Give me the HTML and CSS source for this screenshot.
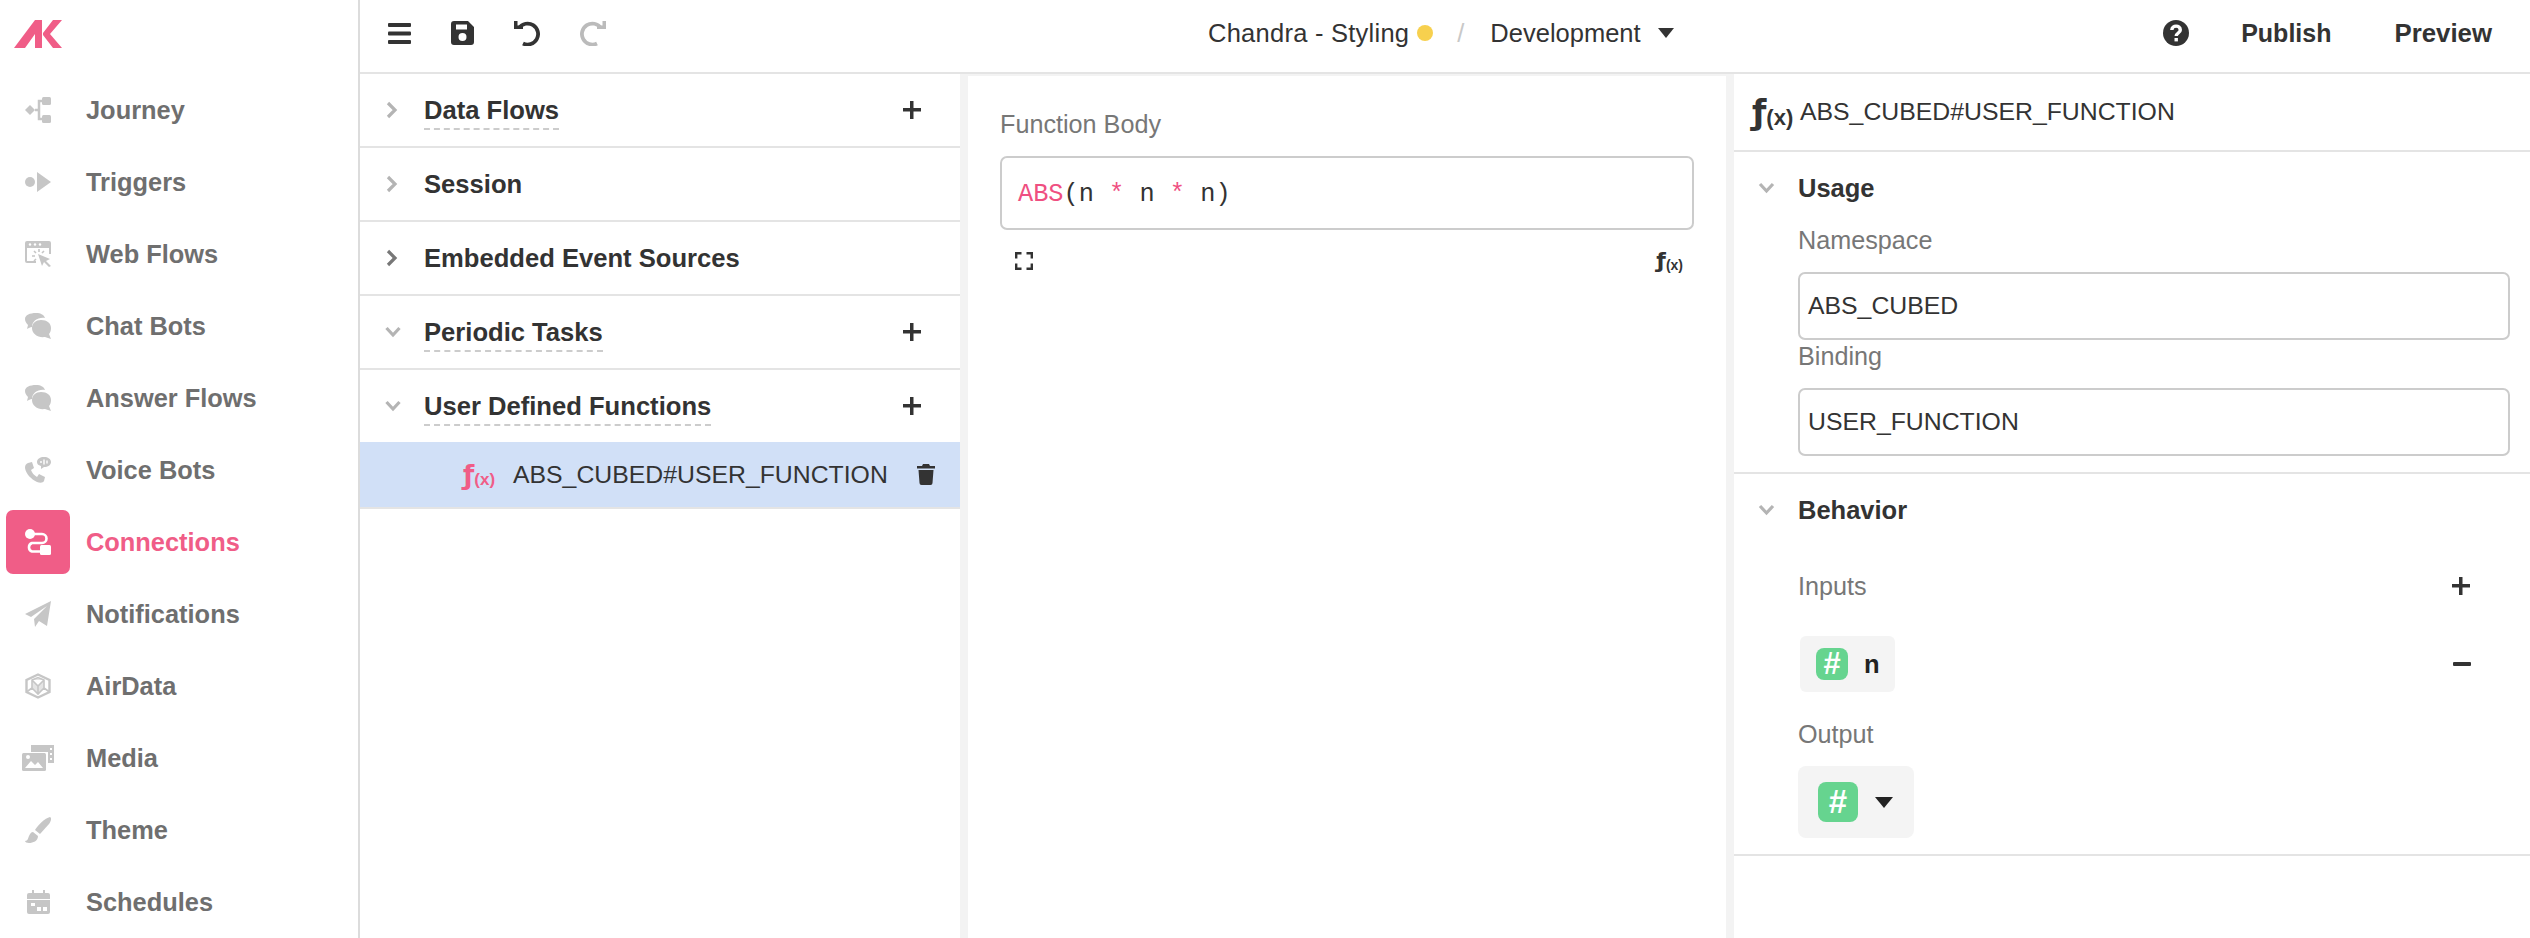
FILE: index.html
```html
<!DOCTYPE html>
<html lang="en">
<head>
<meta charset="utf-8">
<title>ABS_CUBED#USER_FUNCTION</title>
<link rel="stylesheet" href="styles.css">
</head>
<body>
<div class="app">
  <aside class="sidebar">
    <div class="logo">
      <svg width="48" height="28" viewBox="0 0 48 28"><path class="pink" d="M0 28 H11 L21 14 V28 H28 V0 H21Z M29 13 L39 0 H48 L36 14 L48 28 H39 L29 15Z"/></svg>
    </div>
    <nav>
      <a class="nav-item"><span class="nav-icon"><svg width="26" height="26" viewBox="0 0 26 26"><path class="ic" d="M0 13 L5 8 L10 13 L5 18Z"/><rect class="ic" x="17" y="0" width="9" height="8" rx="1.5"/><rect class="ic" x="17" y="18" width="9" height="8" rx="1.5"/><path class="ic-line" d="M17 4 H14 V22 H17 M10 13 H14"/></svg></span><span>Journey</span></a>
      <a class="nav-item"><span class="nav-icon"><svg width="26" height="22" viewBox="0 0 26 22"><circle class="ic" cx="5" cy="11" r="5"/><path class="ic" d="M12 1 L26 11 L12 21Z"/></svg></span><span>Triggers</span></a>
      <a class="nav-item"><span class="nav-icon"><svg width="26" height="26" viewBox="0 0 26 26"><path class="ic" d="M2 0 H24 A2 2 0 0 1 26 2 V13 H24 V7 H2 V20 H11 V22 H2 A2 2 0 0 1 0 20 V2 A2 2 0 0 1 2 0Z"/><path class="ic" d="M13 13 L25 18 L21 20 L26 25 L24 26 L19 21 L17 25Z"/><path class="ic-thin" d="M14 8 V11 M9 10 L11 12 M7 15 H10 M9 20 L11 18 M19 10 L17 12"/><circle class="ic-w" cx="5" cy="3.5" r="1.2"/><circle class="ic-w" cx="10" cy="3.5" r="1.2"/><circle class="ic-w" cx="15" cy="3.5" r="1.2"/></svg></span><span>Web Flows</span></a>
      <a class="nav-item"><span class="nav-icon"><svg width="26" height="26" viewBox="0 0 26 26"><path class="ic" d="M11 0 C16 0 19 2 20 5 C13 4 7 8 7 14 C5 14 4 15 2 16 L3 12 C1 10 0 8 0 6 C0 2 5 0 11 0Z"/><path class="ic" d="M16 7 C22 7 26 10 26 15 C26 18 25 20 24 21 L26 26 L20 24 C13 25 7 21 7 15 C7 10 11 7 16 7Z"/></svg></span><span>Chat Bots</span></a>
      <a class="nav-item"><span class="nav-icon"><svg width="26" height="26" viewBox="0 0 26 26"><path class="ic" d="M11 0 C16 0 19 2 20 5 C13 4 7 8 7 14 C5 14 4 15 2 16 L3 12 C1 10 0 8 0 6 C0 2 5 0 11 0Z"/><path class="ic" d="M16 7 C22 7 26 10 26 15 C26 18 25 20 24 21 L26 26 L20 24 C13 25 7 21 7 15 C7 10 11 7 16 7Z"/></svg></span><span>Answer Flows</span></a>
      <a class="nav-item"><span class="nav-icon"><svg width="26" height="26" viewBox="0 0 26 26"><path class="ic" d="M3 6 L7 5 L9 11 L6 13 C7 16 9 18 12 20 L14 17 L20 20 L19 24 C18 26 15 26 12 25 C6 22 1 17 0 11 C0 8 1 7 3 6Z"/><path class="ic" d="M19 0 C23 0 26 2 26 5 C26 8 23 10 19 10 L16 12 L16 9 C13 8 12 7 12 5 C12 2 15 0 19 0Z"/><path class="ic-thin-w" d="M16 4 V6 M19 2.5 V7.5 M22 3.5 V6.5"/></svg></span><span>Voice Bots</span></a>
      <a class="nav-item active"><span class="nav-icon"><svg width="26" height="26" viewBox="0 0 26 26"><circle class="wh" cx="5" cy="5" r="5"/><rect class="wh" x="15" y="16" width="11" height="10" rx="1.5"/><path class="wh-line" d="M8 5 H17 A4.5 4.5 0 0 1 17 14 H7 A4.5 4.5 0 0 0 7 22.5 H16"/></svg></span><span>Connections</span></a>
      <a class="nav-item"><span class="nav-icon"><svg width="26" height="26" viewBox="0 0 26 26"><path class="ic" d="M26 0 L22 25 L14 20 L10 26 L9 18 L22 5 L6 16 L0 13Z"/></svg></span><span>Notifications</span></a>
      <a class="nav-item"><span class="nav-icon"><svg width="26" height="26" viewBox="0 0 26 26"><path class="ic-outline" d="M13 1.5 L24.5 7 V19 L13 24.5 L1.5 19 V7Z"/><path class="ic-outline-thin" d="M7 7 L13 4.5 L19 7 V15 L13 21 L7 15Z M7 7 L13 13 L19 7 M13 13 V21 M1.5 19 L7 15 M24.5 19 L19 15"/></svg></span><span>AirData</span></a>
      <a class="nav-item"><span class="nav-icon"><svg width="32" height="26" viewBox="0 0 32 26"><path class="ic" d="M9 0 H32 V18 H26 V7 H9Z"/><rect class="ic" x="0" y="8" width="24" height="18" rx="1.5"/><path class="ic-w" d="M3 23 L9 16 L13 20 L16 17 L21 23Z"/><circle class="ic-w" cx="6" cy="12" r="2"/><rect class="ic-w" x="28" y="3" width="2" height="2"/><rect class="ic-w" x="28" y="8" width="2" height="2"/><rect class="ic-w" x="28" y="13" width="2" height="2"/></svg></span><span>Media</span></a>
      <a class="nav-item"><span class="nav-icon"><svg width="26" height="26" viewBox="0 0 26 26"><path class="ic" d="M25 0 C27 1 26 4 24 7 L15 17 L10 13 C13 8 20 1 25 0Z"/><path class="ic" d="M8 15 L13 19 C13 24 8 26 4 26 C2 26 0 25 0 24 C3 24 3 21 4 19 C5 17 6 15 8 15Z"/></svg></span><span>Theme</span></a>
      <a class="nav-item"><span class="nav-icon"><svg width="23" height="24" viewBox="0 0 23 24"><path class="ic" d="M2 3 H5 V0 H7 V3 H16 V0 H18 V3 H21 A2 2 0 0 1 23 5 V9 H0 V5 A2 2 0 0 1 2 3Z"/><path class="ic" d="M0 10 H23 V22 A2 2 0 0 1 21 24 H2 A2 2 0 0 1 0 22Z"/><rect class="ic-w" x="4" y="13" width="4" height="3"/><rect class="ic-w" x="10" y="17" width="4" height="4"/><rect class="ic-w" x="16" y="17" width="4" height="4"/></svg></span><span>Schedules</span></a>
    </nav>
  </aside>
  <main class="main">
    <header class="topbar">
      <div class="tools">
        <svg width="23" height="21" viewBox="0 0 23 21"><rect class="dk" y="0" width="23" height="4" rx="1"/><rect class="dk" y="8.5" width="23" height="4" rx="1"/><rect class="dk" y="17" width="23" height="4" rx="1"/></svg>
        <svg width="23" height="24" viewBox="0 0 23 24"><path class="dk" fill-rule="evenodd" d="M3 0 H17 L23 6 V21 A3 3 0 0 1 20 24 H3 A3 3 0 0 1 0 21 V3 A3 3 0 0 1 3 0Z M5 3.5 V8.5 H16 V3.5Z M11.5 12 A4 4 0 1 0 11.5 20 A4 4 0 1 0 11.5 12Z"/></svg>
        <svg width="26" height="26" viewBox="0 0 26 26"><path class="dk-line" d="M5 8 A10.5 10.5 0 1 1 9 23.5"/><path class="dk" d="M0 1 H3.5 V5.5 L9 5.5 V9 H0Z"/></svg>
        <svg width="26" height="26" viewBox="0 0 26 26"><path class="off-line" d="M21 8 A10.5 10.5 0 1 0 17 23.5"/><path class="off" d="M26 1 H22.5 V5.5 L17 5.5 V9 H26Z"/></svg>
      </div>
      <div class="title">
        <span class="name">Chandra - Styling</span>
        <span class="dot"></span>
        <span class="slash">/</span>
        <span class="env">Development</span>
        <span class="caret"></span>
      </div>
      <div class="actions">
        <svg class="help" width="26" height="26" viewBox="0 0 26 26"><circle class="dk" cx="13" cy="13" r="13"/><path class="wh-q" d="M8.8 10 C9 4.8 17.3 5 17.3 10 C17.3 13 13.2 13 13.2 16"/><rect class="wh" x="11.5" y="18" width="3.4" height="3.4"/></svg>
        <span class="action publish">Publish</span>
        <span class="action preview">Preview</span>
      </div>
    </header>
    <div class="workspace">
      <section class="tree">
        <div class="tree-row"><svg class="chev" width="12" height="18" viewBox="0 0 12 18"><path d="M2 2 L9 9 L2 16"/></svg><span class="tree-label dashed">Data Flows</span><span class="plus"></span></div>
        <div class="tree-row"><svg class="chev" width="12" height="18" viewBox="0 0 12 18"><path d="M2 2 L9 9 L2 16"/></svg><span class="tree-label">Session</span></div>
        <div class="tree-row"><svg class="chev dark" width="12" height="18" viewBox="0 0 12 18"><path d="M2 2 L9 9 L2 16"/></svg><span class="tree-label">Embedded Event Sources</span></div>
        <div class="tree-row"><svg class="chev down" width="16" height="12" viewBox="0 0 16 12"><path d="M1.5 2 L8 9 L14.5 2"/></svg><span class="tree-label dashed">Periodic Tasks</span><span class="plus"></span></div>
        <div class="tree-row open"><svg class="chev down" width="16" height="12" viewBox="0 0 16 12"><path d="M1.5 2 L8 9 L14.5 2"/></svg><span class="tree-label dashed">User Defined Functions</span><span class="plus"></span></div>
        <div class="tree-item">
          <span class="fx fx-pink"><b>ƒ</b><small>(x)</small></span>
          <span class="item-name">ABS_CUBED#USER_FUNCTION</span>
          <svg class="trash" width="18" height="21" viewBox="0 0 18 21"><path class="dk" d="M6 0 H12 L13 2 H18 V4.5 H0 V2 H5Z M1.5 6 H16.5 L15.5 19 A2 2 0 0 1 13.5 21 H4.5 A2 2 0 0 1 2.5 19Z"/></svg>
        </div>
      </section>
      <section class="editor">
        <div class="field-label">Function Body</div>
        <div class="code"><span class="kw">ABS</span>(n <span class="kw">*</span> n <span class="kw">*</span> n)</div>
        <div class="editor-tools">
          <svg width="18" height="18" viewBox="0 0 18 18"><path class="exp" d="M1.2 6.5 V1.2 H6.5 M11.5 1.2 H16.8 V6.5 M16.8 11.5 V16.8 H11.5 M6.5 16.8 H1.2 V11.5"/></svg>
          <span class="fx fx-small"><b>ƒ</b><small>(x)</small></span>
        </div>
      </section>
      <section class="props">
        <div class="props-head"><span class="fx fx-large"><b>ƒ</b><small>(x)</small></span><span class="props-name">ABS_CUBED#USER_FUNCTION</span></div>
        <div class="group">
          <div class="group-head"><svg class="chev down" width="17" height="12" viewBox="0 0 17 12"><path d="M2 2 L8.5 9 L15 2"/></svg><span class="group-title">Usage</span></div>
          <div class="group-body">
            <div class="field-label">Namespace</div>
            <div class="text-input">ABS_CUBED</div>
            <div class="field-label">Binding</div>
            <div class="text-input">USER_FUNCTION</div>
          </div>
        </div>
        <div class="group">
          <div class="group-head"><svg class="chev down" width="17" height="12" viewBox="0 0 17 12"><path d="M2 2 L8.5 9 L15 2"/></svg><span class="group-title">Behavior</span></div>
          <div class="group-body">
            <div class="inputs-head"><span class="field-label">Inputs</span><span class="plus"></span></div>
            <div class="input-row">
              <span class="chip"><span class="hash">#</span><b class="chip-name">n</b></span>
              <span class="minus"></span>
            </div>
            <div class="field-label output-label">Output</div>
            <span class="chip chip-output"><span class="hash hash-large">#</span><span class="caret caret-black"></span></span>
          </div>
        </div>
      </section>
    </div>
  </main>
</div>
</body>
</html>
```
FILE: styles.css
```css
* { box-sizing: border-box; }
html, body { margin: 0; height: 100%; }
body { font-family: "Liberation Sans", Arial, sans-serif; color: #333; background: #fff; overflow: hidden; }
svg { display: block; flex: none; }

.app { display: flex; width: 2530px; height: 938px; }

.pink { fill: #f05d87; }
.ic { fill: #c6c6c6; }
.ic-w { fill: #fff; }
.ic-line { fill: none; stroke: #c6c6c6; stroke-width: 2.5; }
.ic-thin { fill: none; stroke: #c6c6c6; stroke-width: 1.6; }
.ic-thin-w { fill: none; stroke: #fff; stroke-width: 1.4; }
.ic-outline { fill: none; stroke: #c6c6c6; stroke-width: 2.4; }
.ic-outline-thin { fill: #e4e4e4; stroke: #c6c6c6; stroke-width: 1.6; }
.wh { fill: #fff; }
.wh-line { fill: none; stroke: #fff; stroke-width: 2.6; }
.wh-q { fill: none; stroke: #fff; stroke-width: 3.4; }
.dk { fill: #333; }
.dk-line { fill: none; stroke: #333; stroke-width: 3.8; }
.off { fill: #bbb; }
.off-line { fill: none; stroke: #bbb; stroke-width: 3.8; }
.exp { fill: none; stroke: #333; stroke-width: 2.4; }

.sidebar { width: 360px; flex: none; border-right: 2px solid #dcdcdc; }
.logo { height: 74px; padding: 20px 0 0 14px; }
.nav-item { display: flex; align-items: center; height: 72px; padding-left: 6px; font-size: 25.4px; font-weight: 700; color: #6f6f6f; }
.nav-icon { display: flex; align-items: center; justify-content: center; width: 64px; height: 64px; margin-right: 16px; border-radius: 7px; }
.nav-item.active { color: #f05d87; }
.nav-item.active .nav-icon { background: #f05d87; }

.main { flex: 1; display: flex; flex-direction: column; min-width: 0; }

.topbar { position: relative; display: flex; align-items: center; justify-content: space-between; height: 74px; border-bottom: 2px solid #e4e4e4; padding: 0 38px 6px 28px; }
.tools { display: flex; align-items: center; gap: 40px; }
.title { display: flex; align-items: center; position: absolute; left: 848px; top: 18px; font-size: 25.5px; color: #333; line-height: 30px; }
.name { letter-spacing: 0.25px; }
.dot { width: 16px; height: 16px; border-radius: 50%; background: #f7d04e; margin-left: 8px; }
.slash { color: #c8c8c8; margin: 0 26px 0 24px; }
.caret { width: 0; height: 0; border-left: 8px solid transparent; border-right: 8px solid transparent; border-top: 10px solid #333; margin-left: 17px; }
.actions { display: flex; align-items: center; }
.help { margin-right: 52px; }
.action { font-size: 25.8px; font-weight: 700; }
.action.publish { font-size: 25px; margin-right: 63px; }

.workspace { flex: 1; display: flex; min-height: 0; }

.tree { width: 600px; flex: none; }
.tree-row { display: flex; align-items: center; height: 74px; border-bottom: 2px solid #e4e4e4; padding: 0 39px 0 26px; }
.tree-row.open { height: 72px; border-bottom: 0; }
.chev { fill: none; stroke: #b4b4b4; stroke-width: 3.2; margin-right: 26px; }
.chev.dark { stroke: #777; }
.chev.down { margin-left: -1px; margin-right: 23px; }
.tree-label { position: relative; font-size: 25.6px; font-weight: 700; line-height: 30px; }
.tree-label.dashed::after { content: ""; position: absolute; left: 0; right: 0; bottom: -5px; border-bottom: 2px dashed #ccc; }
.plus { position: relative; width: 18px; height: 18px; margin-left: auto; background: linear-gradient(#333, #333) center / 100% 3.5px no-repeat, linear-gradient(#333, #333) center / 3.5px 100% no-repeat; }
.tree-item { display: flex; align-items: center; height: 67px; background: #d1e0f7; border-bottom: 2px solid #e4e4e4; padding-left: 103px; }
.item-name { font-size: 24.8px; margin-left: 18px; white-space: nowrap; }
.trash { margin-left: 29px; }

.fx { display: inline-flex; align-items: flex-end; font-weight: 700; line-height: 1; white-space: nowrap; }
.fx b { font-family: "DejaVu Sans", sans-serif; font-weight: 700; }
.fx small { font-family: "Liberation Sans", Arial, sans-serif; font-weight: 700; }
.fx-pink { color: #f05d87; width: 32px; }
.fx-pink b { font-size: 26px; }
.fx-pink small { font-size: 17px; }
.fx-small { color: #333; }
.fx-small b { font-size: 22px; }
.fx-small small { font-size: 14px; }
.fx-large { color: #333; width: 48px; }
.fx-large b { font-size: 33px; }
.fx-large small { font-size: 22px; }

.editor { width: 758px; flex: none; margin: 2px 8px 0; padding: 32px 32px 0; box-shadow: 0 0 0 8px #f3f3f3; clip-path: inset(-2px -8px 0 -8px); }
.field-label { font-size: 25.2px; line-height: 32px; color: #777; }
.code { display: flex; align-items: center; white-space: pre; height: 74px; margin-top: 16px; padding: 2px 16px 0; border: 2px solid #ccc; border-radius: 7px; font-family: "Liberation Mono", monospace; font-size: 25.3px; color: #333; }
.kw { color: #ef4f81; }
.editor-tools { display: flex; align-items: center; justify-content: space-between; height: 30px; margin-top: 16px; padding: 0 11px 0 15px; }

.props { flex: 1; min-width: 0; }
.props-head { display: flex; align-items: center; height: 78px; border-bottom: 2px solid #e4e4e4; padding: 0 0 0 18px; font-size: 24.8px; white-space: nowrap; }
.group { border-bottom: 2px solid #e4e4e4; }
.group-head { display: flex; align-items: center; height: 72px; padding-left: 24px; }
.group-head .chev.down { margin: 0 23px 0 0; }
.group-title { font-size: 25.5px; font-weight: 700; }
.group-body { padding: 0 20px 16px 64px; }
.text-input { display: flex; align-items: center; height: 68px; margin: 16px 0 0; padding: 0 8px; border: 2px solid #ccc; border-radius: 7px; font-size: 24.8px; color: #333; }
.inputs-head { display: flex; align-items: center; height: 80px; padding-right: 40px; }
.inputs-head .plus { flex: none; }
.input-row { display: flex; align-items: center; justify-content: space-between; margin-top: 10px; padding-right: 39px; }
.chip { display: inline-flex; align-items: center; background: #f4f4f4; border-radius: 6px; }
.input-row .chip { height: 56px; width: 95px; margin-left: 2px; padding-left: 16px; }
.hash { display: flex; align-items: center; justify-content: center; width: 32px; height: 32px; border-radius: 8px; background: #66d48f; color: #fff; font-size: 31px; font-weight: 700; }
.chip-name { margin-left: 16px; font-size: 25.5px; color: #222; }
.minus { width: 18px; height: 4px; border-radius: 1px; background: #333; }
.output-label { margin-top: 26px; }
.chip-output { display: flex; width: 116px; height: 72px; margin-top: 16px; padding-left: 20px; border-radius: 8px; }
.hash-large { width: 40px; height: 40px; font-size: 33px; }
.caret-black { border-left-width: 9.5px; border-right-width: 9.5px; border-top: 11px solid #222; margin-left: 17px; }
```
